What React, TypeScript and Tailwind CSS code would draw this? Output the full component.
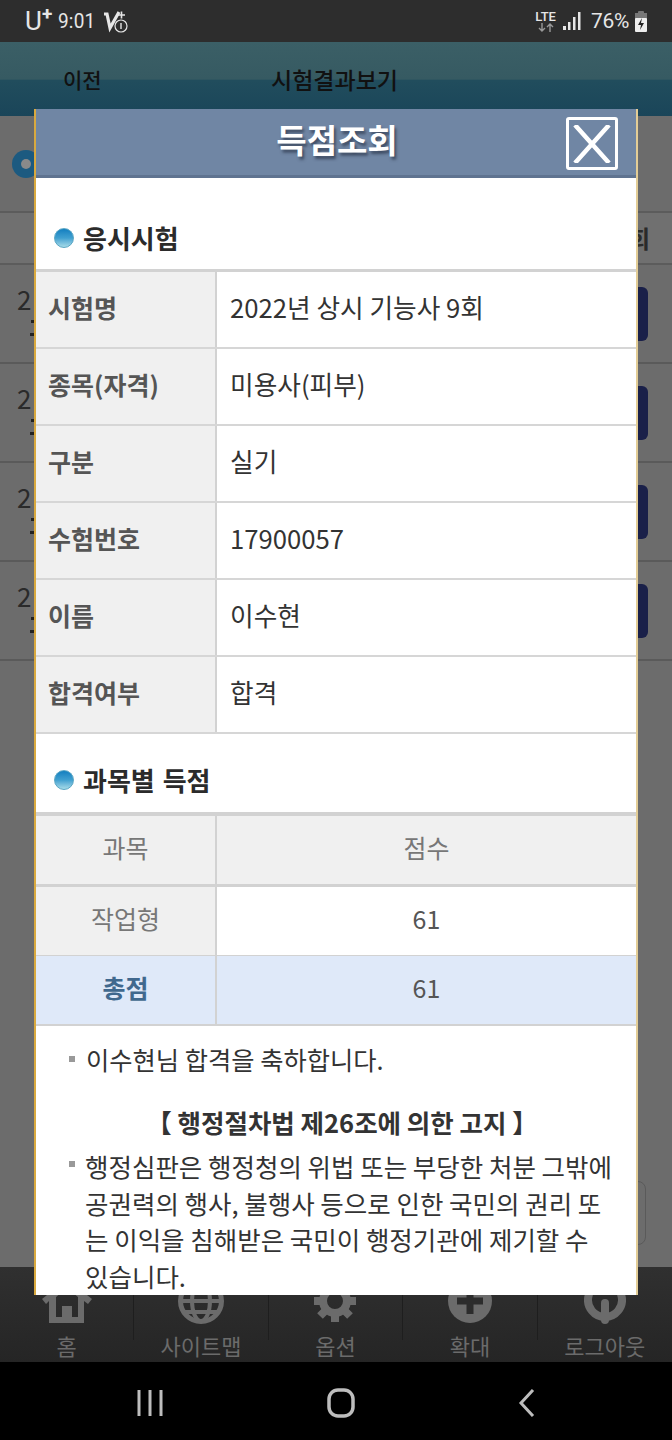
const F = '[font-family:"Noto_Sans_CJK_KR","Noto_Sans",sans-serif]';

function Dot() {
  return <span className="inline-block h-[20px] w-[20px] rounded-full border border-[#5aa6c4] bg-gradient-to-b from-[#0f7fc0] via-[#3fa0d0] to-[#a5dbe8]" />;
}

function SectionTitle({ children, className }: { children: string; className: string }) {
  return (
    <div className={`flex items-center gap-[9px] pl-[18px] text-[26px] leading-[30px] font-bold text-[#2b2b2b] [word-spacing:2px] ${className}`}>
      <Dot />
      <span>{children}</span>
    </div>
  );
}

const info = [
  ['시험명', '2022년 상시 기능사 9회'],
  ['종목(자격)', '미용사(피부)'],
  ['구분', '실기'],
  ['수험번호', '17900057'],
  ['이름', '이수현'],
  ['합격여부', '합격'],
];

function BgRow() {
  return (
    <div className="flex h-[99px] items-start justify-between border-b-2 border-[#5a5a5a] pl-[17px] pr-[24px]">
      <div className="flex flex-col pt-[19px]">
        <div className="text-[26px] leading-[30px] text-[#2a2a2a]">2</div>
        <div className="ml-[14px] mt-[6px] h-[3px] w-[3px] bg-[#222]" />
        <div className="ml-[13px] mt-[10px] h-[3px] w-[4px] bg-[#222]" />
      </div>
      <div className="mt-[22px] h-[54px] w-[40px] rounded-[6px] bg-[#1a2049]" />
    </div>
  );
}

function HomeIcon() {
  return (
    <svg width="50" height="44" viewBox="0 0 50 44" fill="#6b6b6b">
      <path fillRule="evenodd" d="M25 0 50 20l-4 5-4-3v22H7V22l-3 3-4-5zM14 18v20h6V27h10v11h6V18L25 9z" />
    </svg>
  );
}
function GlobeIcon() {
  return (
    <svg width="46" height="46" viewBox="0 0 46 46" fill="none" stroke="#6b6b6b" strokeWidth="5">
      <circle cx="23" cy="23" r="20.5" />
      <ellipse cx="23" cy="23" rx="9" ry="20" strokeWidth="4" />
      <path d="M3 23h40M6 34h34M6 12h34" strokeWidth="4" />
    </svg>
  );
}
function GearIcon() {
  return (
    <svg width="46" height="46" viewBox="0 0 46 46" fill="none" stroke="#6b6b6b">
      <circle cx="23" cy="23" r="12" strokeWidth="8" />
      <path d="M23 2v8M23 36v8M2 23h8M36 23h8M8 8l6 6M32 32l6 6M38 8l-6 6M14 32l-6 6" strokeWidth="8" />
    </svg>
  );
}
function PlusIcon() {
  return (
    <svg width="44" height="44" viewBox="0 0 44 44">
      <circle cx="22" cy="22" r="22" fill="#6b6b6b" />
      <path d="M22 9v26M9 22h26" stroke="#2c2c2c" strokeWidth="7" />
    </svg>
  );
}
function PowerIcon() {
  return (
    <svg width="42" height="46" viewBox="0 0 42 46" fill="none" stroke="#6b6b6b" strokeLinecap="round">
      <path d="M13 7a17 17 0 1 0 16 0" strokeWidth="8" strokeLinecap="butt" />
      <path d="M21 25v17" strokeWidth="8" />
    </svg>
  );
}

const nav = [
  ['홈', <HomeIcon />],
  ['사이트맵', <GlobeIcon />],
  ['옵션', <GearIcon />],
  ['확대', <PlusIcon />],
  ['로그아웃', <PowerIcon />],
] as const;

export default function App() {
  return (
    <div className={`relative flex h-[1440px] w-[672px] flex-col overflow-hidden bg-[#6c6c6c] ${F}`}>
      {/* status bar */}
      <div className="flex h-[42px] items-center justify-between bg-[#2d2d2d] pl-[25px] pr-[24px] text-[#e6e6e6] [font-family:Roboto,sans-serif]">
        <div className="flex items-center">
          <span className="relative text-[26px] leading-none font-normal">U<span className="absolute -top-[4px] left-[17px] text-[19px] font-bold">+</span></span>
          <span className="ml-[15px] text-[20px] leading-none tracking-[0.2px] scale-x-95">9:01</span>
          <svg className="ml-[6px]" width="26" height="26" viewBox="0 0 26 26" fill="none" stroke="#e6e6e6">
            <path d="M2 6h3l3 14L17 4" strokeWidth="3.2" />
            <path d="M16 7h7M19.5 3.5v7" strokeWidth="1.6" />
            <circle cx="19" cy="18" r="6" strokeWidth="1.2" fill="#2d2d2d" />
            <path d="M19 15v6" strokeWidth="1.4" />
          </svg>
        </div>
        <div className="flex items-center">
          <div className="flex flex-col items-center">
            <span className="text-[13px] leading-[13px] font-medium">LTE</span>
            <svg width="16" height="9" viewBox="0 0 16 9" fill="none" stroke="#999" strokeWidth="1.4">
              <path d="M4 0v8M1 5l3 3 3-3M12 9V1M9 4l3-3 3 3" />
            </svg>
          </div>
          <svg className="ml-[7px]" width="19" height="20" viewBox="0 0 19 20" fill="#e6e6e6">
            <rect x="0" y="15" width="3" height="4" />
            <rect x="5" y="11" width="2.5" height="8" />
            <rect x="10" y="6" width="2.5" height="13" />
            <rect x="15" y="1" width="2.5" height="18" />
          </svg>
          <span className="ml-[9px] text-[21px] leading-none tracking-[-0.3px]">76%</span>
          <svg className="ml-[5px]" width="14" height="21" viewBox="0 0 14 21">
            <rect x="4" y="0" width="6" height="3" rx="1" fill="#777" />
            <rect x="1" y="2" width="12" height="6" fill="#777" />
            <rect x="1" y="7" width="12" height="14" rx="1" fill="#eee" />
            <path d="M8 7 4 14h3l-1 5 4-7H7z" fill="#222" />
          </svg>
        </div>
      </div>

      {/* dim page header */}
      <div className="relative h-[74px] bg-[linear-gradient(#3b5f66_0%,#365a62_50%,#214d5d_52%,#1a4559_100%)]">
        <span className="absolute left-[63px] top-[22px] text-[21px] leading-[30px] font-medium text-[#111]">이전</span>
        <span className="absolute left-[271px] top-[22px] text-[23px] leading-[30px] font-medium text-[#111]">시험결과보기</span>
      </div>

      {/* dim page content */}
      <div className="flex min-h-0 flex-1 flex-col">
        <div className="flex h-[95px] items-center pl-[12px]">
          <div className="flex h-[28px] w-[28px] items-center justify-center rounded-full bg-[#1c5a80]">
            <div className="h-[10px] w-[10px] rounded-full bg-[#8a8a8a]" />
          </div>
        </div>
        <div className="flex h-[54px] items-center justify-end border-y-2 border-[#5c5c5c] bg-[#707070] pr-[22px] text-[24px] font-bold text-[#2a2a2a]">회</div>
        <BgRow />
        <BgRow />
        <BgRow />
        <BgRow />
        <div className="flex flex-1 justify-end pr-[26px] pt-[520px]">
          <div className="h-[64px] w-[30px] rounded-[8px] border border-[#5a5a5a]" />
        </div>
      </div>

      {/* dim bottom nav */}
      <div className="grid h-[95px] grid-cols-5 items-start bg-gradient-to-b from-[#303030] to-[#252525]">
        {nav.map(([label, icon], i) => (
          <div key={label} className={`flex h-[73px] flex-col items-center pt-[10px] ${i < 4 ? 'border-r border-[#1e1e1e]' : ''}`}>
            <div className="flex h-[48px] shrink-0 items-center">{icon}</div>
            <span className="mt-[5px] shrink-0 text-[22px] leading-[30px] text-[#6b6b6b]">{label}</span>
          </div>
        ))}
      </div>

      {/* android nav */}
      <div className="flex h-[78px] items-center justify-between bg-black pl-[137px] pr-[136px] pt-[4px]">
        <svg width="26" height="28" viewBox="0 0 26 28" stroke="#bdbdbd" strokeWidth="3">
          <path d="M2 1v26M13 1v26M24 1v26" />
        </svg>
        <svg width="28" height="30" viewBox="0 0 28 30" fill="none" stroke="#bdbdbd" strokeWidth="3.5">
          <rect x="2" y="2" width="24" height="26" rx="9" />
        </svg>
        <svg width="18" height="28" viewBox="0 0 18 28" fill="none" stroke="#bdbdbd" strokeWidth="3">
          <path d="M15 1 3 14l12 13" />
        </svg>
      </div>

      {/* modal */}
      <div className="absolute left-[34px] top-[109px] flex h-[1186px] w-[604px] flex-col overflow-hidden border-l-2 border-r-2 border-l-[#d9a93f] border-r-[#e3cd96] bg-white">
        <div className="-mr-[2px] flex h-[69px] shrink-0 items-center justify-center border-b-[3px] border-[#5f7390] bg-[#7086a4] pb-[6px]">
          <span className="text-[33px] leading-[40px] font-bold text-white [text-shadow:2px_3px_3px_rgba(40,50,70,0.7)]">득점조회</span>
          <div className="absolute right-[18px] top-[8px] flex h-[53px] w-[52px] items-center justify-center rounded-[3px] border-[3px] border-white">
            <svg width="42" height="38" viewBox="0 0 42 38" stroke="white" strokeWidth="4.5">
              <path d="M4 0l34 38M38 0 4 38" />
            </svg>
          </div>
        </div>

        <SectionTitle className="mt-[45px] h-[30px]">응시시험</SectionTitle>

        <div className="mt-[16px] border-t-[3px] border-[#d2d2d2]">
          {info.map(([k, v]) => (
            <div key={k} className="flex h-[77px] border-b-2 border-[#d6d6d6]">
              <div className="flex w-[181px] items-center border-r-2 border-[#d2d2d2] bg-[#f0f0f0] pb-[4px] pl-[12px] text-[25px] font-bold text-[#555]">{k}</div>
              <div className="flex flex-1 items-center pb-[4px] pl-[13px] text-[25.7px] text-[#333]">{v}</div>
            </div>
          ))}
        </div>

        <SectionTitle className="mt-[31px] h-[30px]">과목별 득점</SectionTitle>

        <div className="mt-[17px] border-t-[4px] border-[#d2d2d2] text-[25px]">
          <div className="flex h-[71px] border-b-[3px] border-[#d2d2d2] bg-[#f0f0f0] text-[#777]">
            <div className="flex w-[181px] items-center justify-center border-r-2 border-[#d2d2d2] pb-[4px]">과목</div>
            <div className="flex flex-1 items-center justify-center pb-[4px]">점수</div>
          </div>
          <div className="flex h-[69px] border-b border-[#d2d2d2]">
            <div className="flex w-[181px] items-center justify-center border-r-2 border-[#d2d2d2] bg-[#f0f0f0] pb-[4px] text-[#777]">작업형</div>
            <div className="flex flex-1 items-center justify-center pb-[4px] text-[#555]">61</div>
          </div>
          <div className="flex h-[70px] border-b-2 border-[#d2d2d2] bg-[#dfe9f9]">
            <div className="flex w-[181px] items-center justify-center border-r-2 border-[#d2d2d2] pb-[4px] font-bold text-[#40688e]">총점</div>
            <div className="flex flex-1 items-center justify-center pb-[4px] text-[#555]">61</div>
          </div>
        </div>

        <div className="flex items-center pl-[33px] pt-[15px] text-[25.3px] leading-[36px] text-[#333]">
          <span className="mr-[11px] h-[6px] w-[6px] bg-[#999]" />
          <span>이수현님 합격을 축하합니다.</span>
        </div>
        <div className="mt-[28px] pl-[12px] text-center text-[25.5px] leading-[34px] font-bold text-[#333]">【 행정절차법 제26조에 의한 고지 】</div>
        <div className="relative break-all pl-[49px] pr-[20px] pt-[9px] text-[25.5px] leading-[36.5px] text-[#333]">
          <span className="absolute left-[33px] top-[22px] h-[6px] w-[6px] bg-[#999]" />
          행정심판은 행정청의 위법 또는 부당한 처분 그밖에 공권력의 행사, 불행사 등으로 인한 국민의 권리 또는 이익을 침해받은 국민이 행정기관에 제기할 수 있습니다.
        </div>
      </div>
    </div>
  );
}
